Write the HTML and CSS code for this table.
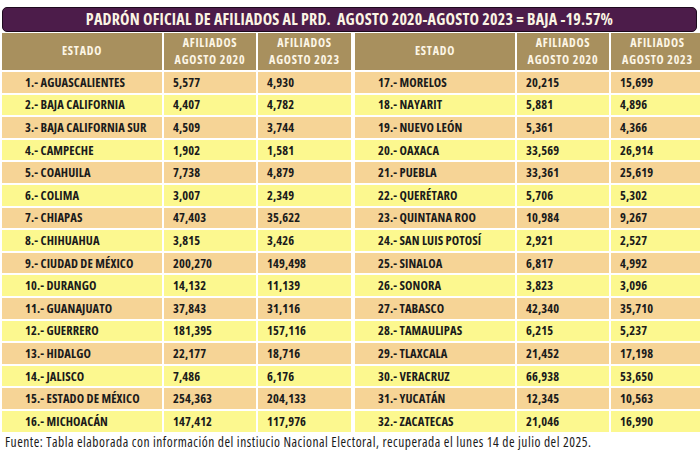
FILE: index.html
```html
<!DOCTYPE html>
<html lang="es">
<head>
<meta charset="utf-8">
<link rel="stylesheet" href="styles.css">
</head>
<body>
<div class="page">
  <div class="title">PADRÓN OFICIAL DE AFILIADOS AL PRD.&nbsp; AGOSTO 2020-AGOSTO 2023 = BAJA -19.57%</div>
  <div class="tables">
    <div class="grid">
      <div class="h">ESTADO</div><div class="h">AFILIADOS<br>AGOSTO 2020</div><div class="h">AFILIADOS<br>AGOSTO 2023</div>
      <div class="c s o">1.- AGUASCALIENTES</div><div class="c o">5,577</div><div class="c o">4,930</div>
      <div class="c s e">2.- BAJA CALIFORNIA</div><div class="c e">4,407</div><div class="c e">4,782</div>
      <div class="c s o">3.- BAJA CALIFORNIA SUR</div><div class="c o">4,509</div><div class="c o">3,744</div>
      <div class="c s e">4.- CAMPECHE</div><div class="c e">1,902</div><div class="c e">1,581</div>
      <div class="c s o">5.- COAHUILA</div><div class="c o">7,738</div><div class="c o">4,879</div>
      <div class="c s e">6.- COLIMA</div><div class="c e">3,007</div><div class="c e">2,349</div>
      <div class="c s o">7.- CHIAPAS</div><div class="c o">47,403</div><div class="c o">35,622</div>
      <div class="c s e">8.- CHIHUAHUA</div><div class="c e">3,815</div><div class="c e">3,426</div>
      <div class="c s o">9.- CIUDAD DE MÉXICO</div><div class="c o">200,270</div><div class="c o">149,498</div>
      <div class="c s e">10.- DURANGO</div><div class="c e">14,132</div><div class="c e">11,139</div>
      <div class="c s o">11.- GUANAJUATO</div><div class="c o">37,843</div><div class="c o">31,116</div>
      <div class="c s e">12.- GUERRERO</div><div class="c e">181,395</div><div class="c e">157,116</div>
      <div class="c s o">13.- HIDALGO</div><div class="c o">22,177</div><div class="c o">18,716</div>
      <div class="c s e">14.- JALISCO</div><div class="c e">7,486</div><div class="c e">6,176</div>
      <div class="c s o">15.- ESTADO DE MÉXICO</div><div class="c o">254,363</div><div class="c o">204,133</div>
      <div class="c s e">16.- MICHOACÁN</div><div class="c e">147,412</div><div class="c e">117,976</div>
    </div>
    <div class="grid">
      <div class="h">ESTADO</div><div class="h">AFILIADOS<br>AGOSTO 2020</div><div class="h">AFILIADOS<br>AGOSTO 2023</div>
      <div class="c s o">17.- MORELOS</div><div class="c o">20,215</div><div class="c o">15,699</div>
      <div class="c s e">18.- NAYARIT</div><div class="c e">5,881</div><div class="c e">4,896</div>
      <div class="c s o">19.- NUEVO LEÓN</div><div class="c o">5,361</div><div class="c o">4,366</div>
      <div class="c s e">20.- OAXACA</div><div class="c e">33,569</div><div class="c e">26,914</div>
      <div class="c s o">21.- PUEBLA</div><div class="c o">33,361</div><div class="c o">25,619</div>
      <div class="c s e">22.- QUERÉTARO</div><div class="c e">5,706</div><div class="c e">5,302</div>
      <div class="c s o">23.- QUINTANA ROO</div><div class="c o">10,984</div><div class="c o">9,267</div>
      <div class="c s e">24.- SAN LUIS POTOSÍ</div><div class="c e">2,921</div><div class="c e">2,527</div>
      <div class="c s o">25.- SINALOA</div><div class="c o">6,817</div><div class="c o">4,992</div>
      <div class="c s e">26.- SONORA</div><div class="c e">3,823</div><div class="c e">3,096</div>
      <div class="c s o">27.- TABASCO</div><div class="c o">42,340</div><div class="c o">35,710</div>
      <div class="c s e">28.- TAMAULIPAS</div><div class="c e">6,215</div><div class="c e">5,237</div>
      <div class="c s o">29.- TLAXCALA</div><div class="c o">21,452</div><div class="c o">17,198</div>
      <div class="c s e">30.- VERACRUZ</div><div class="c e">66,938</div><div class="c e">53,650</div>
      <div class="c s o">31.- YUCATÁN</div><div class="c o">12,345</div><div class="c o">10,563</div>
      <div class="c s e">32.- ZACATECAS</div><div class="c e">21,046</div><div class="c e">16,990</div>
    </div>
  </div>
  <div class="foot">Fuente: Tabla elaborada con información del instiucio Nacional Electoral, recuperada el lunes 14 de julio del 2025.</div>
</div>
</body>
</html>
```
FILE: styles.css
```css
html, body {
  margin: 0;
  padding: 0;
  background: #ffffff;
}
body {
  font-family: "Open Sans", "Roboto", "DejaVu Sans Condensed", sans-serif;
  font-stretch: 75%;
  color: #1b1b1b;
}
.page {
  width: 695px;
  padding: 7px 0 0 2px;
}
.title {
  height: 23px;
  background: #4c1c4a;
  border: 1px solid #1e0a1e;
  border-radius: 5px;
  color: #fbf4e4;
  font-weight: 700;
  font-size: 16px;
  letter-spacing: 0.2px;
  line-height: 23px;
  text-align: center;
}
.tables {
  display: flex;
  gap: 4px;
  margin-top: 1px;
}
.grid {
  display: grid;
  grid-template-columns: 160px 92px 93px;
  grid-template-rows: 37px;
  grid-auto-rows: 20.6px;
  gap: 2px;
  flex: 0 0 auto;
}
.h {
  background: #a8905e;
  color: #fdf6e6;
  font-weight: 700;
  font-size: 12px;
  letter-spacing: 0.75px;
  line-height: 16.5px;
  display: flex;
  align-items: center;
  justify-content: center;
  text-align: center;
}
.c {
  font-weight: 700;
  font-size: 12.5px;
  letter-spacing: 0.1px;
  display: flex;
  align-items: center;
  padding-left: 9px;
}
.s {
  padding-left: 23px;
}
.o { background: #f6d496; }
.e { background: #fcf88f; }
.foot {
  margin-top: 1px;
  padding-left: 3px;
  font-size: 13.5px;
  letter-spacing: 0.5px;
  color: #1b1b1b;
}
```
